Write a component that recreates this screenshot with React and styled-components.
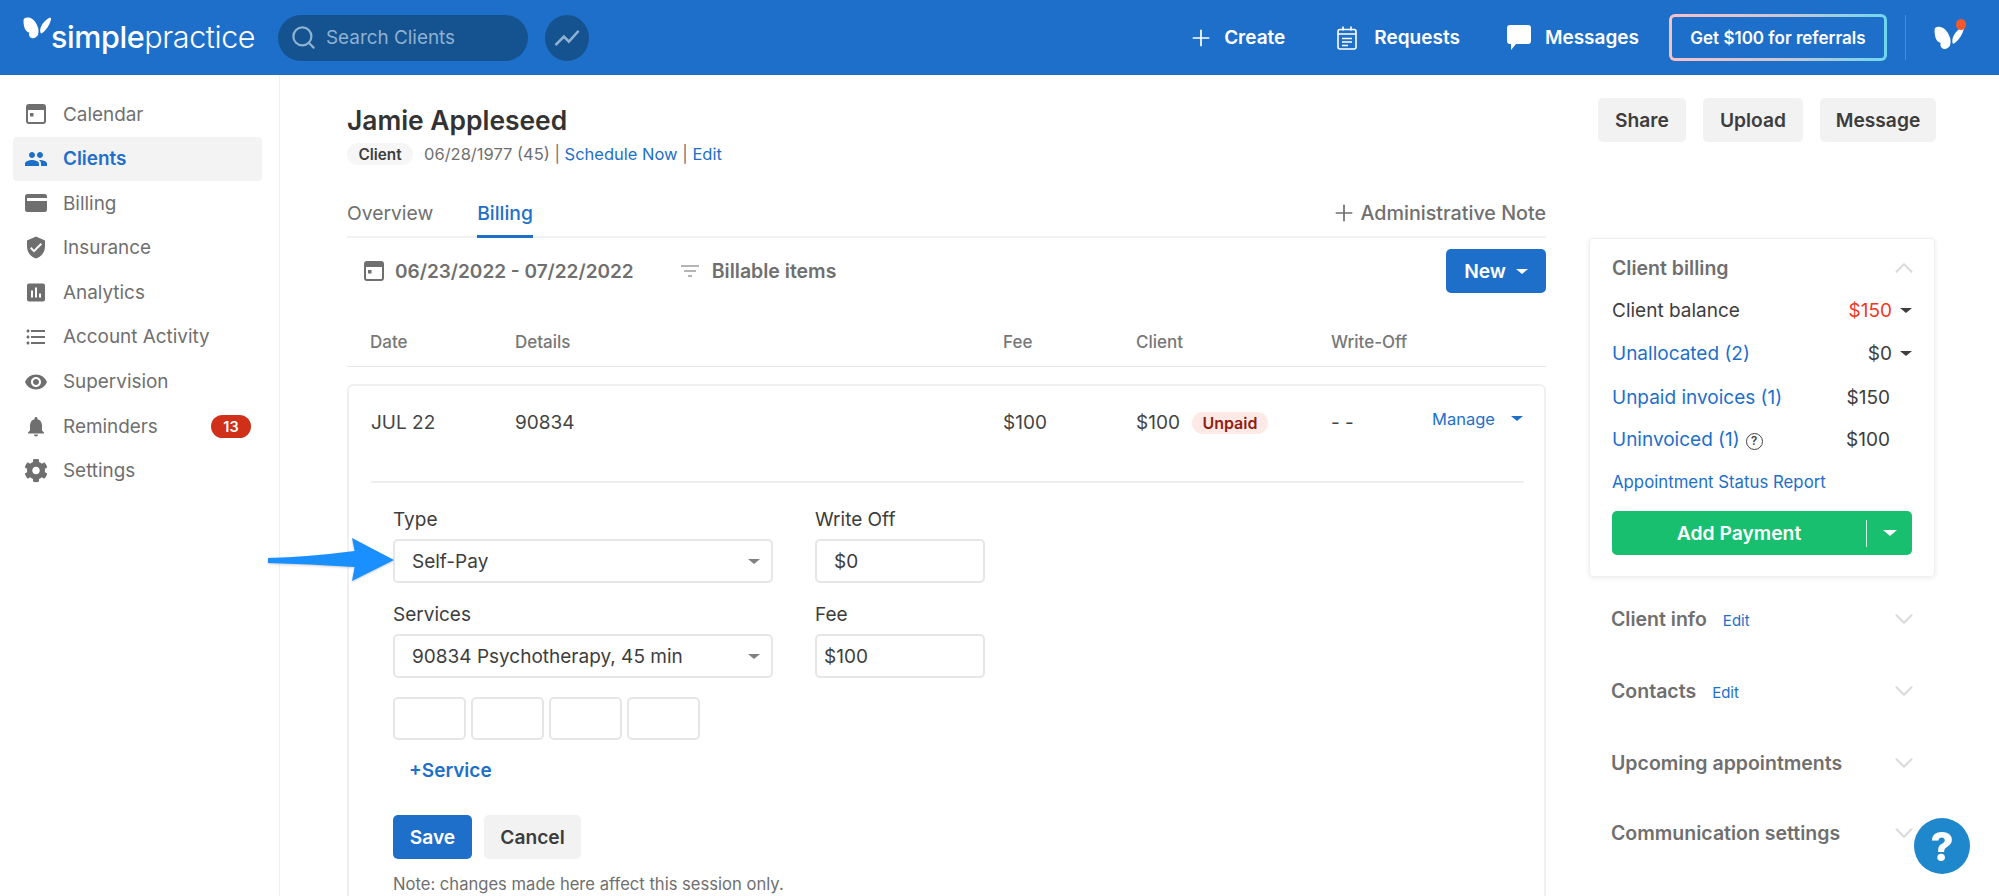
import React from 'react';
import styled, { createGlobalStyle } from 'styled-components';
import { Search, Plus, ChevronUp, ChevronDown } from 'lucide-react';
import {
  MdGroup,
  MdVerifiedUser,
  MdAssessment,
  MdFormatListBulleted,
  MdVisibility,
  MdNotifications,
  MdShowChart,
  MdFilterList,
} from 'react-icons/md';
import { FaCog } from 'react-icons/fa';

const BLUE = '#1e6fc9';
const GREY = '#6f6f6f';
const DARK = '#3d3d3d';

const GlobalStyle = createGlobalStyle`
  html, body { margin: 0; height: 100%; background: #fff; }
  body { font-family: Inter, "Liberation Sans", sans-serif; color: ${DARK}; }
  * { box-sizing: border-box; }
`;

const Page = styled.div`
  height: 100vh;
  overflow: hidden;
  display: flex;
  flex-direction: column;
`;

/* top bar */
const Header = styled.header`
  flex: 0 0 75px;
  display: flex;
  align-items: center;
  padding: 0 33px 0 23px;
  background: ${BLUE};
  color: #fff;
`;

const Logo = styled.div`
  display: flex;
  align-items: flex-start;
  width: 232px;
  font-size: 30.5px;
  line-height: 36px;
  letter-spacing: -0.4px;
  svg { margin-top: -3px; flex: none; }
  div { margin-left: -2px; margin-top: -1px; }
  b { font-weight: 500; }
  span { font-weight: 300; }
`;

const SearchBox = styled.div`
  width: 250px;
  height: 46px;
  margin-left: 23px;
  padding-left: 12px;
  display: flex;
  align-items: center;
  gap: 9px;
  border-radius: 23px;
  background: #14538f;
  color: #8fb1d2;
  font-size: 18.9px;
`;

const TrendButton = styled.div`
  width: 44px;
  height: 46px;
  margin-left: 17px;
  display: flex;
  align-items: center;
  justify-content: center;
  border-radius: 50%;
  background: #14538f;
  color: #8fb1d2;
`;

const HeaderRight = styled.div`
  margin-left: auto;
  display: flex;
  align-items: center;
`;

const HeaderLink = styled.a`
  display: flex;
  align-items: center;
  gap: ${(p) => p.$gap}px;
  margin-left: ${(p) => p.$left}px;
  font-size: 19px;
  font-weight: 600;
`;

const ReferralButton = styled.div`
  width: 218px;
  height: 47px;
  margin-left: 30px;
  display: flex;
  align-items: center;
  justify-content: center;
  border: 3px solid transparent;
  border-radius: 6px;
  background: linear-gradient(${BLUE}, ${BLUE}) padding-box,
    linear-gradient(90deg, #fbc0c6, #c9c8d4 55%, #6fd6ee) border-box;
  font-size: 17px;
  font-weight: 600;
`;

const HeaderDivider = styled.div`
  width: 1px;
  height: 45px;
  margin: 0 28px 0 18px;
  background: #4c8cd4;
`;

const AccountIcon = styled.div`
  position: relative;
  width: 32px;
  height: 24px;
`;

const AccountDot = styled.i`
  position: absolute;
  top: -7px;
  right: 0;
  width: 10px;
  height: 11px;
  border-radius: 50%;
  background: #f4592c;
`;

const Body = styled.div`
  flex: 1;
  display: flex;
  min-height: 0;
`;

/* left nav */
const Sidebar = styled.nav`
  flex: 0 0 280px;
  padding: 17px 17px 0 13px;
  border-right: 1px solid #efefef;
  display: flex;
  flex-direction: column;
  gap: 0.6px;
`;

const NavItem = styled.a`
  height: 44px;
  padding: 0 11px;
  display: flex;
  align-items: center;
  gap: 15px;
  border-radius: 4px;
  font-size: 18.9px;
  color: ${(p) => (p.$active ? BLUE : GREY)};
  font-weight: ${(p) => (p.$active ? 600 : 400)};
  background: ${(p) => (p.$active ? '#f3f3f3' : 'transparent')};
`;

const NavIcon = styled.span`
  width: 24px;
  height: 24px;
  flex: none;
  display: flex;
  align-items: center;
  justify-content: center;
`;

const Badge = styled.span`
  margin-left: auto;
  width: 40px;
  height: 23px;
  display: flex;
  align-items: center;
  justify-content: center;
  border-radius: 12px;
  background: #d0301a;
  color: #fff;
  font-size: 14.5px;
  font-weight: 600;
`;

/* main area */
const Main = styled.main`
  flex: 1;
  padding: 23px 63px 0 67px;
  min-width: 0;
`;

const TitleRow = styled.div`
  display: flex;
  justify-content: space-between;
  align-items: flex-start;
`;

const Name = styled.h1`
  margin: 5px 0 6px;
  font-size: 26.4px;
  line-height: 34px;
  font-weight: 600;
  color: #333;
`;

const Meta = styled.div`
  height: 22px;
  display: flex;
  align-items: center;
  font-size: 16.5px;
  color: ${GREY};
  white-space: pre;
`;

const Pill = styled.span`
  height: 22px;
  width: 66px;
  margin-right: 11px;
  display: flex;
  align-items: center;
  justify-content: center;
  border-radius: 11px;
  background: #f6f6f6;
  color: ${DARK};
  font-size: 15.3px;
  font-weight: 600;
`;

const Link = styled.a`
  color: ${BLUE};
`;

const Actions = styled.div`
  display: flex;
  gap: 17px;
`;

const Button = styled.button`
  height: 44px;
  width: ${(p) => p.$width}px;
  padding: 0;
  border: 0;
  border-radius: 5px;
  display: flex;
  align-items: center;
  justify-content: center;
  gap: 10px;
  font-family: inherit;
  font-size: 19.2px;
  font-weight: 600;
  color: ${(p) => (p.$primary ? '#fff' : DARK)};
  background: ${(p) => (p.$primary ? BLUE : '#f2f2f2')};
`;

const NewButton = styled(Button)`
  margin-left: auto;
`;

const Columns = styled.div`
  display: flex;
  gap: 43px;
  margin-top: 30px;
`;

const Content = styled.section`
  flex: 0 0 1199px;
`;

const Tabs = styled.div`
  height: 43px;
  display: flex;
  border-bottom: 2px solid #f2f2f2;
  font-size: 19.3px;
  line-height: 24px;
`;

const Tab = styled.a`
  height: 43px;
  margin-right: 44px;
  padding-top: 6px;
  color: ${(p) => (p.$active ? BLUE : GREY)};
  font-weight: ${(p) => (p.$active ? 500 : 400)};
  border-bottom: 3px solid ${(p) => (p.$active ? BLUE : 'transparent')};
`;

const AdminNote = styled.a`
  margin: 6px 0 0 auto;
  height: 24px;
  display: flex;
  align-items: center;
  gap: 3px;
  color: ${GREY};
  font-size: 19.7px;
  font-weight: 500;
`;

const Toolbar = styled.div`
  height: 44px;
  margin-top: 11px;
  padding-left: 17px;
  display: flex;
  align-items: center;
  color: ${GREY};
  font-size: 19px;
  font-weight: 600;
`;

const DateRange = styled.div`
  display: flex;
  align-items: center;
  gap: 11px;
`;

const FilterLabel = styled.div`
  display: flex;
  align-items: center;
  gap: 10px;
  margin-left: 44px;
  font-size: 19.5px;
`;

const Caret = styled.i`
  display: inline-block;
  flex: none;
  border-left: ${(p) => p.$size || 6}px solid transparent;
  border-right: ${(p) => p.$size || 6}px solid transparent;
  border-top: ${(p) => (p.$size || 6) - 1}px solid ${(p) => p.$color || 'currentColor'};
`;

const TableHead = styled.div`
  height: 74px;
  padding: 0 0 14px 23px;
  display: grid;
  grid-template-columns: 145px 488px 133px 195px 1fr;
  align-items: end;
  border-bottom: 1px solid #e6e6e6;
  font-size: 17px;
  line-height: 20px;
  font-weight: 500;
  color: #777;
`;

const Card = styled.div`
  margin-top: 17px;
  padding-bottom: 60px;
  border: 2px solid #f0f0f0;
  border-radius: 6px;
`;

const Row = styled.div`
  margin-top: 25px;
  padding-left: 22px;
  height: 22px;
  display: grid;
  grid-template-columns: 144px 488px 133px 195px 101px 1fr;
  align-items: center;
  font-size: 19px;
  color: #444;
`;

const ClientCell = styled.div`
  display: flex;
  align-items: center;
  gap: 12px;
`;

const StatusPill = styled.span`
  width: 76px;
  height: 22px;
  display: flex;
  align-items: center;
  justify-content: center;
  border-radius: 11px;
  background: #fde9e6;
  color: #8f1d12;
  font-size: 16px;
  font-weight: 600;
`;

const Manage = styled.a`
  display: flex;
  align-items: center;
  gap: 16px;
  margin-top: -8px;
  color: ${BLUE};
  font-size: 16.5px;
`;

const Divider = styled.div`
  height: 2px;
  margin: 48px 20px 0 22px;
  background: #efefef;
`;

const Form = styled.div`
  margin-top: 25px;
  padding-left: 44px;
`;

const FieldGrid = styled.div`
  display: grid;
  grid-template-columns: 380px 170px;
  column-gap: 42px;
  row-gap: 20px;
`;

const Label = styled.div`
  height: 23px;
  margin-bottom: 8px;
  font-size: 19px;
  line-height: 23px;
  color: ${DARK};
`;

const FieldWrap = styled.div`
  position: relative;
`;

const Control = styled.div`
  height: 44px;
  padding: 0 ${(p) => p.$right || 11}px 0 ${(p) => p.$left || 17}px;
  display: flex;
  align-items: center;
  justify-content: space-between;
  border: 2px solid #e6e6e6;
  border-radius: 5px;
  font-size: 19px;
  color: ${DARK};
`;

const Pointer = styled.svg`
  position: absolute;
  left: -125px;
  top: -1px;
  filter: drop-shadow(0 1px 1px rgba(0, 0, 0, 0.2));
`;

const ModifierRow = styled.div`
  margin-top: 19px;
  display: flex;
  gap: 5px;
`;

const Modifier = styled.div`
  width: 73px;
  height: 43px;
  border: 2px solid #e6e6e6;
  border-radius: 5px;
`;

const AddService = styled.a`
  display: block;
  margin-top: 19px;
  padding-left: 16px;
  font-size: 19px;
  line-height: 24px;
  font-weight: 600;
  color: ${BLUE};
`;

const FormButtons = styled.div`
  margin-top: 32px;
  display: flex;
  gap: 12px;
`;

const Note = styled.div`
  margin-top: 14px;
  font-size: 16.6px;
  line-height: 22px;
  color: ${GREY};
`;

/* right column */
const Aside = styled.aside`
  flex: 0 0 346px;
  margin-top: 43px;
`;

const Panel = styled.div`
  height: 339px;
  padding: 17px 22px 0;
  border: 1px solid #f0f0f0;
  border-radius: 4px;
  box-shadow: 0 1px 5px rgba(0, 0, 0, 0.08);
`;

const SectionTitle = styled.div`
  flex: 1;
  display: flex;
  align-items: center;
  font-size: 19.5px;
  line-height: 24px;
  font-weight: 600;
  color: ${GREY};
  svg { margin: -4px -7px -4px auto; color: #dadada; }
`;

const SectionEdit = styled.a`
  margin-left: 16px;
  margin-top: 3px;
  font-size: 15px;
  font-weight: 400;
  color: ${BLUE};
`;

const BalanceRows = styled.div`
  margin-top: 8px;
  display: grid;
  grid-template-rows: 44px 42px 46px 39px 45px;
  font-size: 19px;
`;

const BalanceRow = styled.div`
  display: flex;
  align-items: center;
  justify-content: space-between;
  padding-right: ${(p) => (p.$plain ? 22 : 0)}px;
`;

const Amount = styled.span`
  display: flex;
  align-items: center;
  gap: 8px;
  color: ${(p) => (p.$red ? '#f0391f' : DARK)};
  i { color: ${DARK}; }
`;

const Help = styled.span`
  display: inline-flex;
  margin-left: 6px;
  width: 17px;
  height: 17px;
  align-items: center;
  justify-content: center;
  vertical-align: 1px;
  border: 1.5px solid #444;
  border-radius: 50%;
  color: #444;
  font-size: 11.5px;
  font-weight: 600;
`;

const SmallLink = styled.a`
  align-self: center;
  font-size: 16.8px;
  color: ${BLUE};
`;

const PayButton = styled.div`
  height: 44px;
  margin-top: 7px;
  display: flex;
  align-items: center;
  border-radius: 5px;
  background: #17bf6f;
  color: #fff;
  font-size: 19.3px;
  font-weight: 600;
`;

const PayLabel = styled.span`
  width: 254px;
  text-align: center;
`;

const PaySplit = styled.i`
  width: 1px;
  height: 27px;
  margin-right: 16px;
  background: rgba(255, 255, 255, 0.8);
`;

const Section = styled.div`
  height: 72px;
  padding: 0 23px 0 22px;
  display: flex;
  align-items: center;
  &:last-child { margin-top: -2px; }
`;

const SectionList = styled.div`
  margin-top: 6px;
`;

const HelpBubble = styled.div`
  position: fixed;
  right: 29px;
  bottom: 22px;
  width: 56px;
  height: 56px;
  display: flex;
  align-items: center;
  justify-content: center;
  border-radius: 50%;
  background: #1f87cc;
  color: #fff;
  font-size: 40px;
  font-weight: 800;
`;

const Butterfly = ({ width, height }) => (
  <svg width={width} height={height} viewBox="0 0 30 22" fill="#fff">
    <path d="M0.5 3.5C0.5 0.8 3 0 6 0.6C10 1.4 13.6 5.4 15.2 11.5C15.8 13.8 15.4 16.6 15 18C13.6 20.4 11 21.8 8.6 21C6.2 20.2 5.6 17.6 6.2 15.4C3.4 15 0.5 12.2 0.5 3.5Z" />
    <path d="M17.2 14.6C16.8 9.8 20.4 4.4 25.6 1.2C27.2 0.4 28.4 0.8 28 2.4C27 7.2 23.2 13.4 18.6 16.4C17.8 16.6 17.3 15.8 17.2 14.6Z" />
  </svg>
);

const CalendarIcon = ({ size = 20 }) => (
  <svg width={size} height={size} viewBox="0 0 20 20" fill="none">
    <rect x="1" y="1" width="18" height="18" rx="2" fill="#fff" stroke="#6f6f6f" strokeWidth="2" />
    <rect x="1" y="1" width="18" height="5" fill="#6f6f6f" />
    <rect x="4" y="9" width="3.5" height="3.5" fill="#6f6f6f" />
  </svg>
);

const CardIcon = () => (
  <svg width="22" height="18" viewBox="0 0 22 18">
    <rect width="22" height="18" rx="2.5" fill="#6f6f6f" />
    <rect x="2" y="4" width="18" height="3" fill="#fff" />
    <rect x="2" y="4" width="20" height="3" fill="#fff" />
  </svg>
);

const RequestsIcon = () => (
  <svg width="20" height="24" viewBox="0 0 20 24" fill="none" stroke="#fff" strokeWidth="1.6">
    <rect x="1" y="3.5" width="18" height="19.5" rx="2" />
    <path d="M1 8h18M6 0.5v4M14 0.5v4M5 12.5h10M5 16h10M5 19.5h6" />
  </svg>
);

const MessageIcon = () => (
  <svg width="24" height="25" viewBox="0 0 24 25" fill="#fff">
    <path d="M3 0h18a3 3 0 0 1 3 3v13a3 3 0 0 1-3 3H9l-5 6v-6H3a3 3 0 0 1-3-3V3a3 3 0 0 1 3-3z" />
  </svg>
);

const navItems = [
  { label: 'Calendar', icon: <CalendarIcon /> },
  { label: 'Clients', icon: <MdGroup size={28} />, active: true },
  { label: 'Billing', icon: <CardIcon /> },
  { label: 'Insurance', icon: <MdVerifiedUser size={25} /> },
  { label: 'Analytics', icon: <MdAssessment size={25} /> },
  { label: 'Account Activity', icon: <MdFormatListBulleted size={26} /> },
  { label: 'Supervision', icon: <MdVisibility size={26} /> },
  { label: 'Reminders', icon: <MdNotifications size={27} />, badge: 13 },
  { label: 'Settings', icon: <FaCog size={25} /> },
];

const sections = [
  { title: 'Client info', edit: true },
  { title: 'Contacts', edit: true },
  { title: 'Upcoming appointments' },
  { title: 'Communication settings' },
];

export default function App() {
  return (
    <Page>
      <GlobalStyle />
      <Header>
        <Logo>
          <Butterfly width={30} height={22} />
          <div><b>simple</b><span>practice</span></div>
        </Logo>
        <SearchBox>
          <Search size={27} strokeWidth={2} />
          Search Clients
        </SearchBox>
        <TrendButton><MdShowChart size={30} /></TrendButton>
        <HeaderRight>
          <HeaderLink $gap={10} $left={0}><Plus size={26} strokeWidth={1.6} />Create</HeaderLink>
          <HeaderLink $gap={17} $left={52}><RequestsIcon />Requests</HeaderLink>
          <HeaderLink $gap={14} $left={47}><MessageIcon />Messages</HeaderLink>
          <ReferralButton>Get $100 for referrals</ReferralButton>
          <HeaderDivider />
          <AccountIcon>
            <Butterfly width={32} height={24} />
            <AccountDot />
          </AccountIcon>
        </HeaderRight>
      </Header>
      <Body>
        <Sidebar>
          {navItems.map((item) => (
            <NavItem key={item.label} $active={item.active}>
              <NavIcon>{item.icon}</NavIcon>
              {item.label}
              {item.badge && <Badge>{item.badge}</Badge>}
            </NavItem>
          ))}
        </Sidebar>
        <Main>
          <TitleRow>
            <div>
              <Name>Jamie Appleseed</Name>
              <Meta>
                <Pill>Client</Pill>
                06/28/1977 (45) | <Link>Schedule Now</Link> | <Link>Edit</Link>
              </Meta>
            </div>
            <Actions>
              <Button $width={88}>Share</Button>
              <Button $width={100}>Upload</Button>
              <Button $width={116}>Message</Button>
            </Actions>
          </TitleRow>
          <Columns>
            <Content>
              <Tabs>
                <Tab>Overview</Tab>
                <Tab $active>Billing</Tab>
                <AdminNote><Plus size={26} strokeWidth={1.6} />Administrative Note</AdminNote>
              </Tabs>
              <Toolbar>
                <DateRange><CalendarIcon />06/23/2022 - 07/22/2022</DateRange>
                <FilterLabel><MdFilterList size={24} color="#b5b5b5" />Billable items</FilterLabel>
                <NewButton $primary $width={100}>New <Caret $size={6} $color="#fff" /></NewButton>
              </Toolbar>
              <TableHead>
                <div>Date</div>
                <div>Details</div>
                <div>Fee</div>
                <div>Client</div>
                <div>Write-Off</div>
              </TableHead>
              <Card>
                <Row>
                  <div>JUL 22</div>
                  <div>90834</div>
                  <div>$100</div>
                  <ClientCell>$100 <StatusPill>Unpaid</StatusPill></ClientCell>
                  <div>- -</div>
                  <Manage>Manage <Caret $size={6} $color={BLUE} /></Manage>
                </Row>
                <Divider />
                <Form>
                  <FieldGrid>
                    <div>
                      <Label>Type</Label>
                      <FieldWrap>
                        <Pointer width="126" height="44" viewBox="0 0 126 44">
                          <path d="M0 20 Q40 19 86.6 13 L84 0 L126 22 L84 43 L86.6 29 Q40 26 0 25 Z" fill="#1a8fff" />
                        </Pointer>
                        <Control>Self-Pay <Caret $size={6} $color="#808080" /></Control>
                      </FieldWrap>
                    </div>
                    <div>
                      <Label>Write Off</Label>
                      <Control>$0</Control>
                    </div>
                    <div>
                      <Label>Services</Label>
                      <Control>90834 Psychotherapy, 45 min <Caret $size={6} $color="#808080" /></Control>
                    </div>
                    <div>
                      <Label>Fee</Label>
                      <Control $left={7}>$100</Control>
                    </div>
                  </FieldGrid>
                  <ModifierRow>
                    <Modifier /><Modifier /><Modifier /><Modifier />
                  </ModifierRow>
                  <AddService>+Service</AddService>
                  <FormButtons>
                    <Button $primary $width={79}>Save</Button>
                    <Button $width={97}>Cancel</Button>
                  </FormButtons>
                  <Note>Note: changes made here affect this session only.</Note>
                </Form>
              </Card>
            </Content>
            <Aside>
              <Panel>
                <SectionTitle>Client billing <ChevronUp size={30} strokeWidth={1.6} /></SectionTitle>
                <BalanceRows>
                  <BalanceRow>
                    Client balance
                    <Amount $red>$150 <Caret $size={6.5} /></Amount>
                  </BalanceRow>
                  <BalanceRow>
                    <Link>Unallocated (2)</Link>
                    <Amount>$0 <Caret $size={6.5} /></Amount>
                  </BalanceRow>
                  <BalanceRow $plain>
                    <Link>Unpaid invoices (1)</Link>
                    <Amount>$150</Amount>
                  </BalanceRow>
                  <BalanceRow $plain>
                    <span><Link>Uninvoiced (1)</Link><Help>?</Help></span>
                    <Amount>$100</Amount>
                  </BalanceRow>
                  <BalanceRow>
                    <SmallLink>Appointment Status Report</SmallLink>
                  </BalanceRow>
                </BalanceRows>
                <PayButton>
                  <PayLabel>Add Payment</PayLabel>
                  <PaySplit />
                  <Caret $size={7} $color="#fff" />
                </PayButton>
              </Panel>
              <SectionList>
                {sections.map((s) => (
                  <Section key={s.title}>
                    <SectionTitle>
                      {s.title}
                      {s.edit && <SectionEdit>Edit</SectionEdit>}
                      <ChevronDown size={30} strokeWidth={1.6} />
                    </SectionTitle>
                  </Section>
                ))}
              </SectionList>
            </Aside>
          </Columns>
        </Main>
      </Body>
      <HelpBubble>?</HelpBubble>
    </Page>
  );
}
